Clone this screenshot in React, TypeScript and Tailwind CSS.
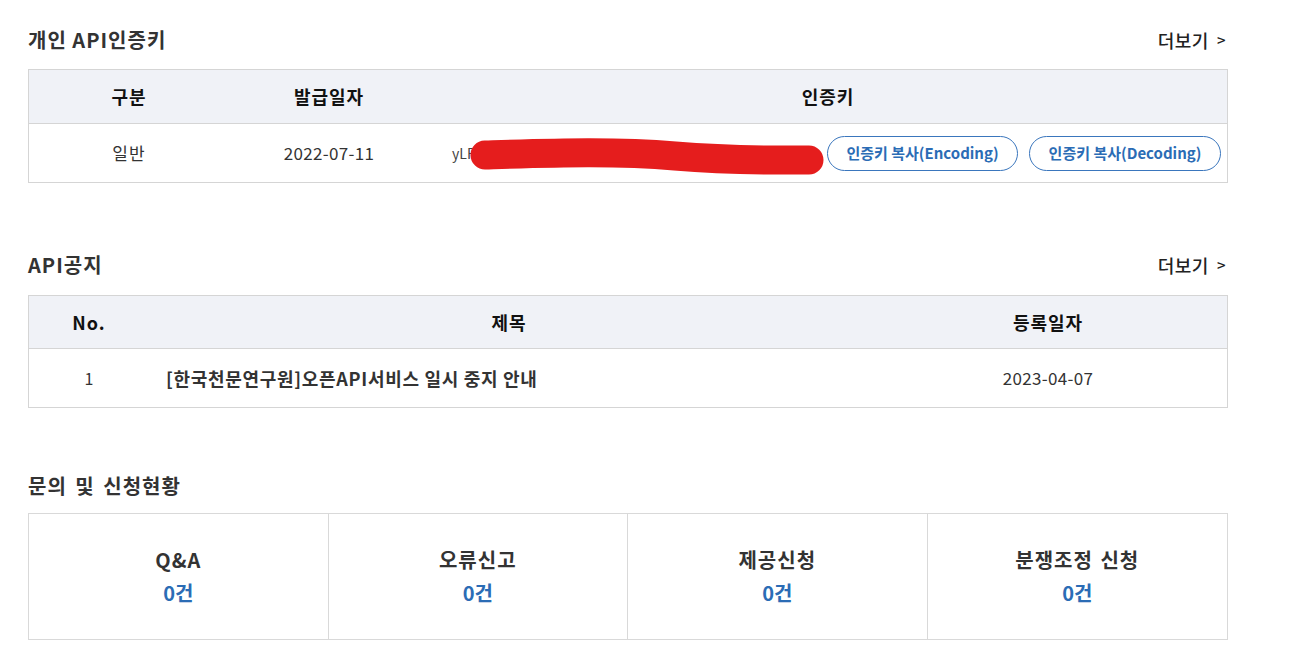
import React from "react";

const font = { fontFamily: '"Noto Sans CJK KR", "Noto Sans", sans-serif' };

function More() {
  return (
    <div className="flex items-center gap-[8px] text-[18px] font-medium text-[#222] leading-[28px] tracking-[0.5px]">
      <span>더보기</span>
      <span className="text-[15px]">&gt;</span>
    </div>
  );
}

function Counter({ title }: { title: string }) {
  return (
    <div className="flex flex-col items-center justify-center border-r border-[#d9d9d9] last:border-r-0">
      <div className="text-[20px] font-bold text-[#333] leading-[28px] tracking-[1px] [word-spacing:2px]">{title}</div>
      <div className="text-[20px] font-bold text-[#2b6cb5] leading-[28px] mt-[5px]">0건</div>
    </div>
  );
}

export default function App() {
  return (
    <div className="bg-white min-h-[668px] pl-[28px] pt-[26px]" style={font}>
      <div className="w-[1200px]">
        {/* Section 1 */}
        <div className="flex items-center justify-between pr-[2px]">
          <h2 className="text-[20px] font-bold text-[#333] leading-[28px] tracking-[1px]">개인 API인증키</h2>
          <More />
        </div>
        <div className="mt-[15px] border border-[#d5d5d5]">
          <div className="grid grid-cols-[200px_200px_1fr] h-[54px] bg-[#f0f2f7] border-b border-[#d5d5d5] items-center text-[18px] font-bold text-[#111] tracking-[1px]">
            <div className="text-center">구분</div>
            <div className="text-center">발급일자</div>
            <div className="text-center">인증키</div>
          </div>
          <div className="grid grid-cols-[200px_200px_1fr] h-[58px] items-center text-[17px] text-[#333]">
            <div className="text-center tracking-[1px]">일반</div>
            <div className="text-center tracking-[0.3px]">2022-07-11</div>
            <div className="relative flex items-center justify-between pl-[23px] pr-[6px]">
              <span className="text-[14px] text-[#444]">yLF</span>
              <svg
                className="absolute left-[36px] top-[-2px]"
                width="360"
                height="50"
                viewBox="0 0 360 50"
              >
                <path
                  d="M20 21 C 90 19, 150 17, 210 22 S 310 26, 344 26"
                  stroke="#e51d1d"
                  strokeWidth="29"
                  strokeLinecap="round"
                  fill="none"
                />
              </svg>
              <div className="flex gap-[11px]">
                <button className="h-[35px] w-[191px] rounded-full border border-[#3a76bd] text-[15px] font-semibold text-[#2b6cb5] bg-white">
                  인증키 복사(Encoding)
                </button>
                <button className="h-[35px] w-[192px] rounded-full border border-[#3a76bd] text-[15px] font-semibold text-[#2b6cb5] bg-white">
                  인증키 복사(Decoding)
                </button>
              </div>
            </div>
          </div>
        </div>

        {/* Section 2 */}
        <div className="mt-[68px] flex items-center justify-between pr-[2px]">
          <h2 className="text-[20px] font-bold text-[#333] leading-[28px] tracking-[1px]">API공지</h2>
          <More />
        </div>
        <div className="mt-[16px] border border-[#d5d5d5]">
          <div className="grid grid-cols-[120px_720px_1fr] h-[53px] bg-[#f0f2f7] border-b border-[#d5d5d5] items-center text-[18px] font-bold text-[#111] tracking-[1px]">
            <div className="text-center">No.</div>
            <div className="text-center">제목</div>
            <div className="text-center">등록일자</div>
          </div>
          <div className="grid grid-cols-[120px_720px_1fr] h-[58px] items-center text-[17px] text-[#333]">
            <div className="text-center text-[16px]">1</div>
            <div className="pl-[17px] text-[18px] font-semibold tracking-[0.7px]">[한국천문연구원]오픈API서비스 일시 중지 안내</div>
            <div className="text-center tracking-[0.3px]">2023-04-07</div>
          </div>
        </div>

        {/* Section 3 */}
        <div className="mt-[64px]">
          <h2 className="text-[20px] font-bold text-[#333] leading-[28px] tracking-[1px] [word-spacing:3px]">문의 및 신청현황</h2>
        </div>
        <div className="mt-[13px] grid grid-cols-4 h-[127px] border border-[#d9d9d9]">
          <Counter title="Q&A" />
          <Counter title="오류신고" />
          <Counter title="제공신청" />
          <Counter title="분쟁조정 신청" />
        </div>
      </div>
    </div>
  );
}
